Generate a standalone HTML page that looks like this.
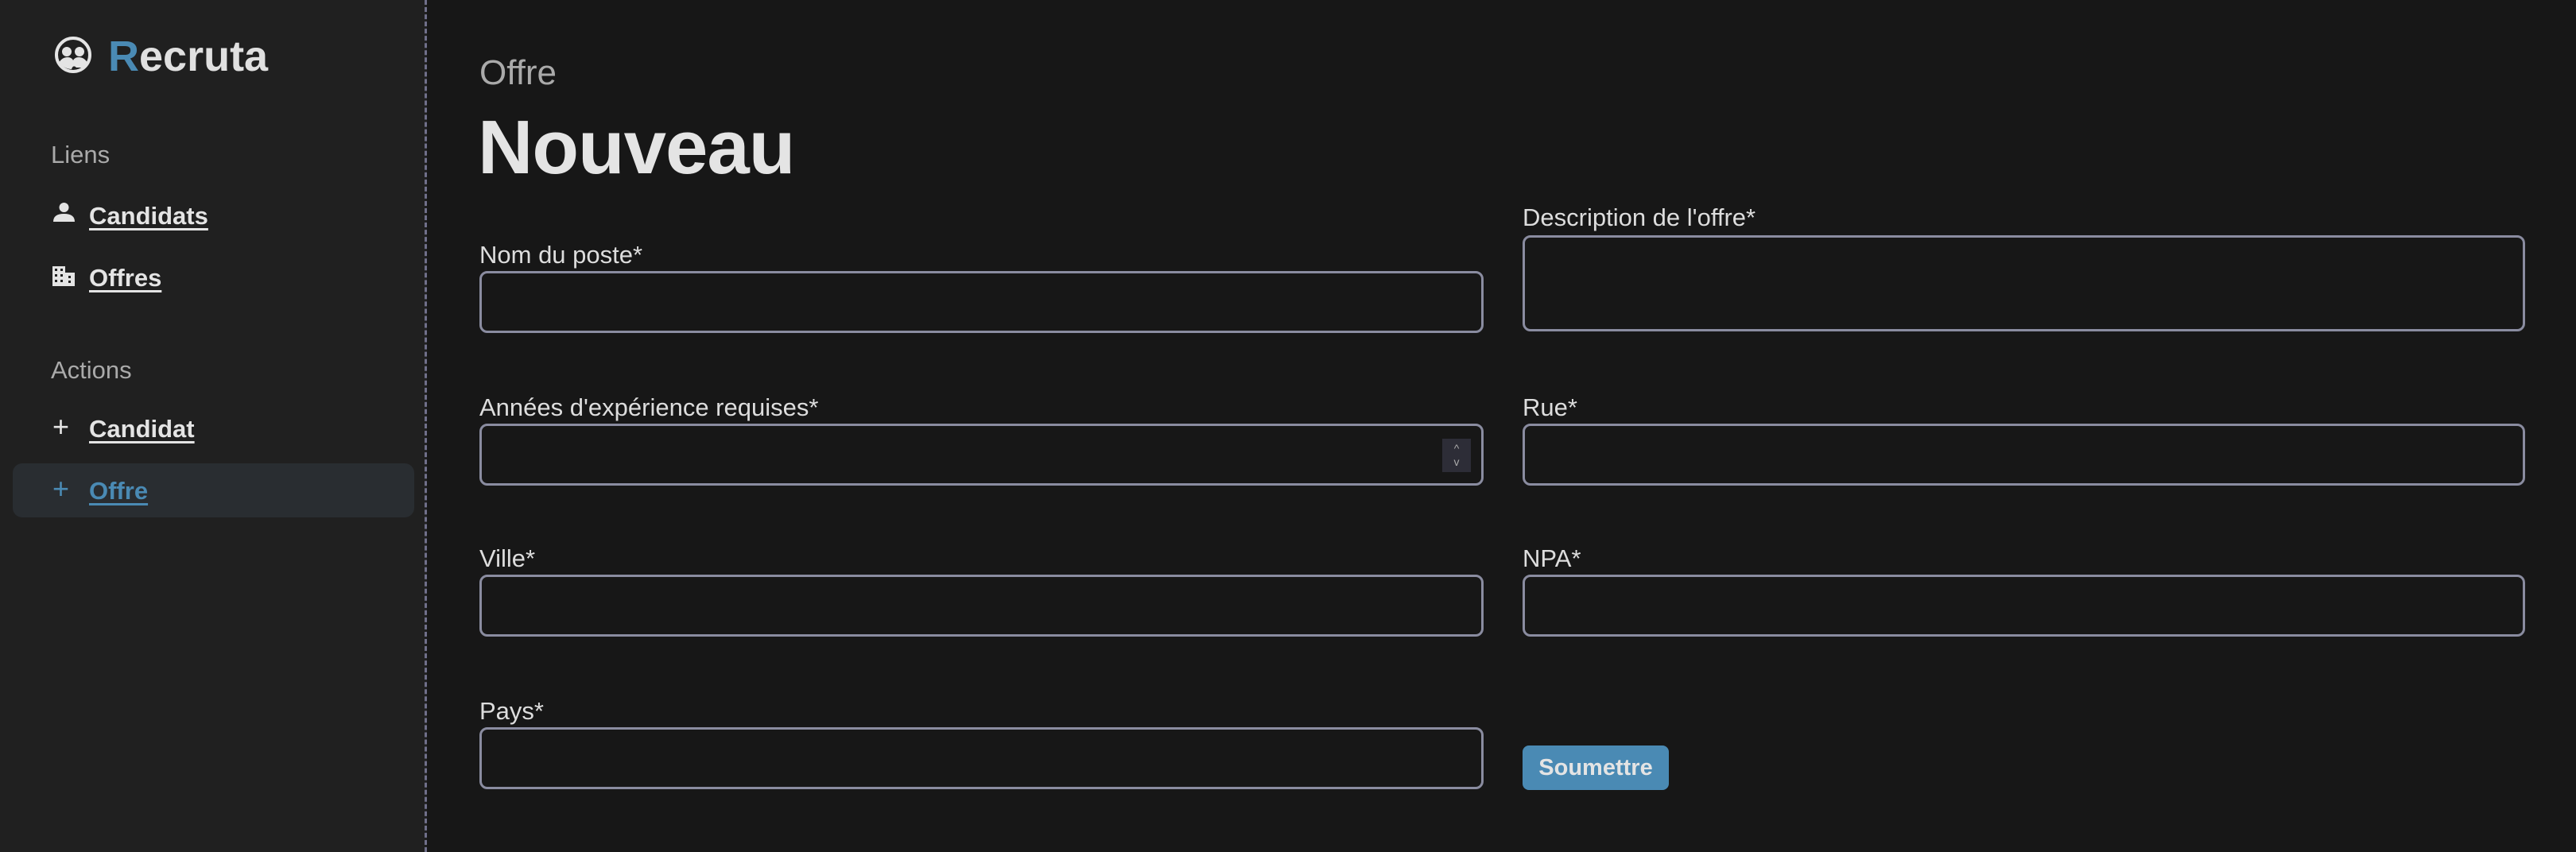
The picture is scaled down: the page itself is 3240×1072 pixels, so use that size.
<!DOCTYPE html>
<html><head><meta charset="utf-8"><style>
*{box-sizing:border-box;margin:0;padding:0}
body{width:3240px;height:1072px;background:#171717;font-family:"Liberation Sans",sans-serif;color:#e0e0e0;position:relative;overflow:hidden}
.side{position:absolute;left:0;top:0;width:537px;height:1072px;background:#202020;border-right:3px dashed #70708a}
.abs{position:absolute;white-space:nowrap}
.nav{font-size:31px;font-weight:bold;text-decoration:underline;text-decoration-thickness:3px;text-underline-offset:5px;color:#e4e4e4}
.sec{font-size:31px;color:#aaa}
.lbl{font-size:31px;color:#ddd}
.in{position:absolute;border:3px solid #8a8ca0;border-radius:10px;background:#171717}
</style></head><body>
<div class="side"></div>
<svg class="abs" style="left:68px;top:45px" width="48" height="48" viewBox="0 0 48 48"><circle cx="24" cy="24" r="21" fill="none" stroke="#e4e4e4" stroke-width="4"/><circle cx="16" cy="20" r="6" fill="#e4e4e4"/><circle cx="32" cy="20" r="6" fill="#e4e4e4"/><path d="M6 34 Q10 27 17 27 Q22 27 24 31 Q26 27 31 27 Q38 27 42 34 L38 40 L28 40 Q24 36 22 42 Q14 42 6 34Z" fill="#e4e4e4"/></svg>
<div class="abs" style="left:136px;top:36px;font-size:54px;font-weight:bold;line-height:70px"><span style="color:#4a8ab4">R</span>ecruta</div>
<div class="abs sec" style="left:64px;top:177px">Liens</div>
<svg class="abs" style="left:67px;top:255px" width="27" height="24" viewBox="0 0 27 24"><circle cx="13.5" cy="6" r="6" fill="#e4e4e4"/><path d="M0 24 Q0 14 13.5 14 Q27 14 27 24Z" fill="#e4e4e4"/></svg>
<div class="abs nav" style="left:112px;top:254px">Candidats</div>
<svg class="abs" style="left:66px;top:335px" width="28" height="25" viewBox="0 0 28 25"><rect x="0" y="0" width="16" height="25" fill="#e4e4e4"/><rect x="16" y="8" width="12" height="17" fill="#e4e4e4"/><g fill="#202020"><rect x="3" y="3" width="3" height="3"/><rect x="10" y="3" width="3" height="3"/><rect x="3" y="10" width="3" height="3"/><rect x="10" y="10" width="3" height="3"/><rect x="3" y="17" width="3" height="3"/><rect x="10" y="17" width="3" height="3"/><rect x="20" y="12" width="3" height="3"/><rect x="20" y="18" width="3" height="3"/></g></svg>
<div class="abs nav" style="left:112px;top:332px">Offres</div>
<div class="abs sec" style="left:64px;top:448px">Actions</div>
<div class="abs" style="left:66px;top:516px;font-size:36px;color:#e4e4e4">+</div>
<div class="abs nav" style="left:112px;top:522px">Candidat</div>
<div class="abs" style="left:16px;top:583px;width:505px;height:68px;background:#292d31;border-radius:12px"></div>
<div class="abs" style="left:66px;top:594px;font-size:36px;color:#4a8ab4">+</div>
<div class="abs nav" style="left:112px;top:600px;color:#4a8ab4">Offre</div>

<div class="abs" style="left:603px;top:67px;font-size:44px;color:#aaa">Offre</div>
<div class="abs" style="left:601px;top:131px;font-size:96px;font-weight:bold;color:#e4e4e4;letter-spacing:-1px">Nouveau</div>

<div class="abs lbl" style="left:603px;top:303px">Nom du poste*</div>
<div class="in" style="left:603px;top:341px;width:1263px;height:78px"></div>
<div class="abs lbl" style="left:1915px;top:256px">Description de l'offre*</div>
<div class="in" style="left:1915px;top:296px;width:1261px;height:121px"></div>
<div class="abs lbl" style="left:603px;top:495px">Années d'expérience requises*</div>
<div class="in" style="left:603px;top:533px;width:1263px;height:78px"><div style="position:absolute;left:1208px;top:16px;width:36px;height:42px;background:#2d2d37;color:#aaa;font-size:14px;line-height:17px;text-align:center;padding-top:4px">^<br>v</div></div>
<div class="abs lbl" style="left:1915px;top:495px">Rue*</div>
<div class="in" style="left:1915px;top:533px;width:1261px;height:78px"></div>
<div class="abs lbl" style="left:603px;top:685px">Ville*</div>
<div class="in" style="left:603px;top:723px;width:1263px;height:78px"></div>
<div class="abs lbl" style="left:1915px;top:685px">NPA*</div>
<div class="in" style="left:1915px;top:723px;width:1261px;height:78px"></div>
<div class="abs lbl" style="left:603px;top:877px">Pays*</div>
<div class="in" style="left:603px;top:915px;width:1263px;height:78px"></div>
<div class="abs" style="left:1915px;top:938px;width:184px;height:56px;background:#4a8ab4;border-radius:8px;font-size:29px;font-weight:bold;color:#e4e4e4;text-align:center;line-height:56px">Soumettre</div>
</body></html>
